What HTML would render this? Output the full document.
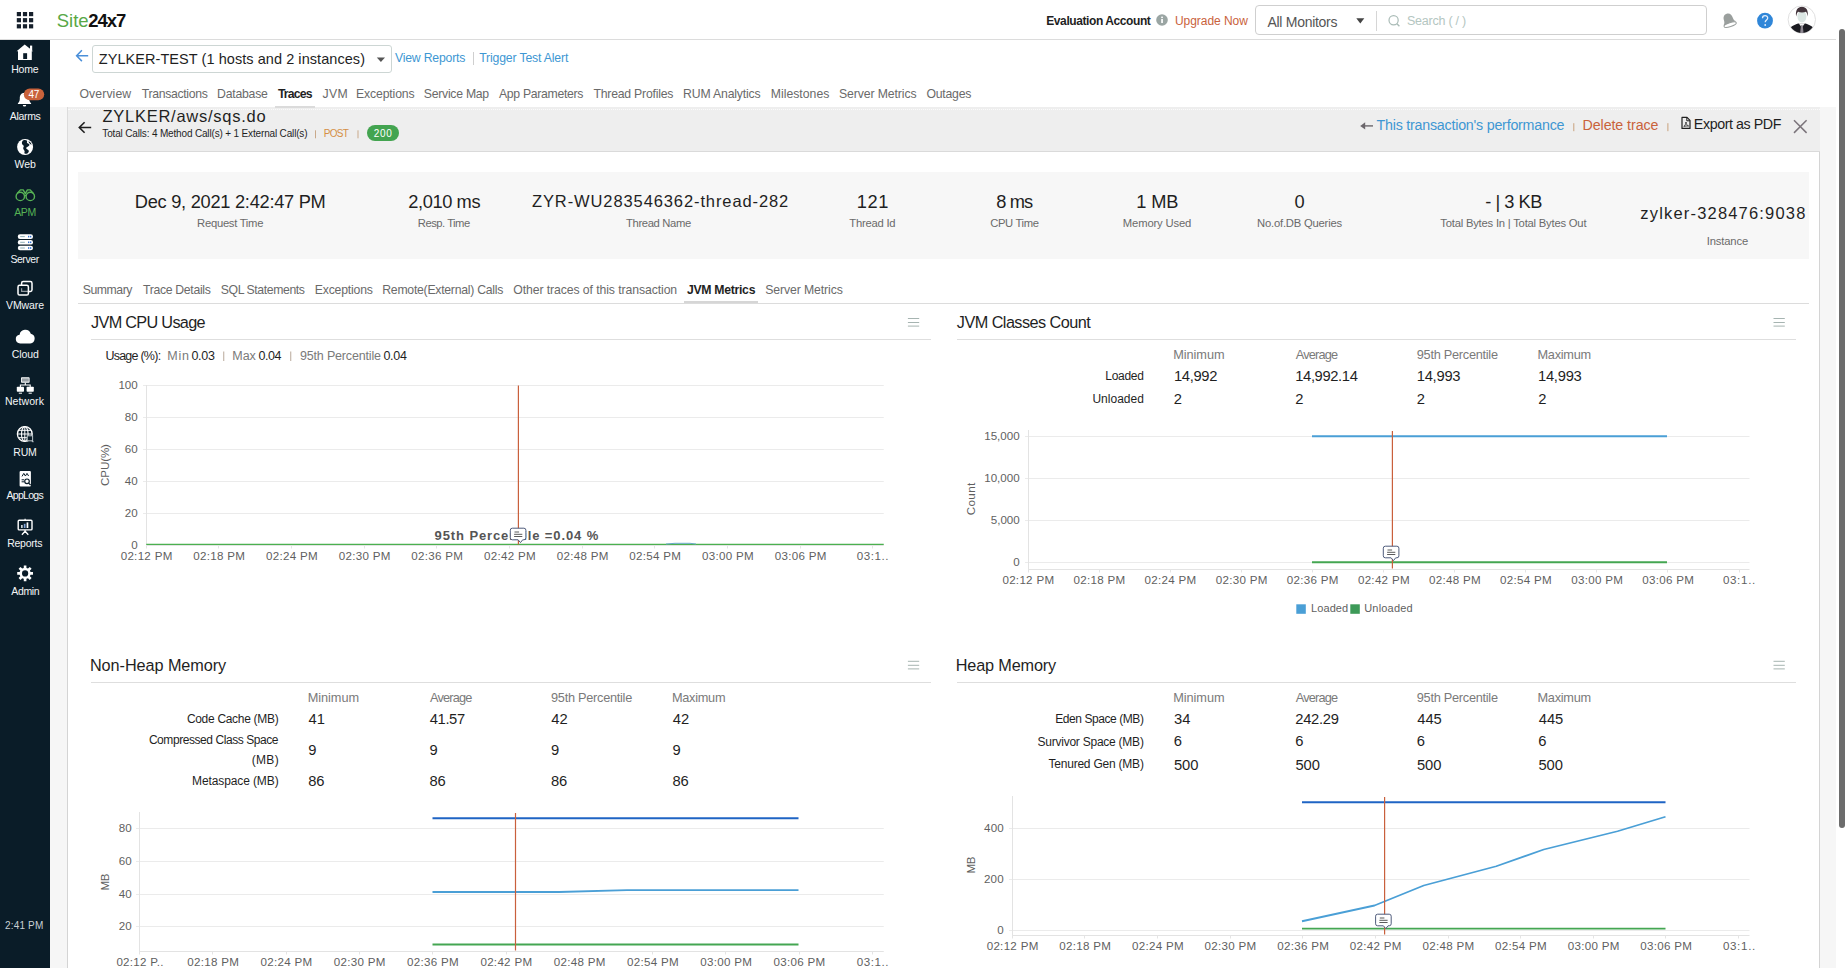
<!DOCTYPE html>
<html lang="en"><head><meta charset="utf-8"><title>Site24x7 - JVM Metrics</title>
<style>
html,body{margin:0;padding:0;overflow:hidden;font-family:"Liberation Sans",sans-serif;}
html{width:1848px;height:968px;}
body{width:1848px;height:968px;overflow:hidden;position:relative;background:#fff;
 font-family:"Liberation Sans",sans-serif;}
.t{position:absolute;white-space:nowrap;font-family:"Liberation Sans",sans-serif;}
.b{position:absolute;box-sizing:border-box;}
svg{position:absolute;left:0;top:0;}
</style></head>
<body>
<div class="b" style="left:0;top:39px;width:1836px;height:1px;background:#dcdcdc"></div>
<div class="b" style="left:0;top:40px;width:50px;height:928px;background:#0a1c28"></div>
<div class="b" style="left:50px;top:107px;width:1786px;height:861px;background:#f6f6f6"></div>
<div class="b" style="left:67px;top:107px;width:1753px;height:861px;background:#fff;border-left:1px solid #d4d4d4;border-right:1px solid #d4d4d4"></div>
<div class="b" style="left:67px;top:107px;width:1753px;height:45px;background:#eeeeee;border-bottom:1px solid #dadada;border-left:1px solid #dcdcdc"></div>
<div class="b" style="left:68px;top:109px;width:1752px;height:0;border-top:1px dotted #fbfbfb"></div>
<div class="b" style="left:78px;top:172px;width:1731px;height:87px;background:#f7f7f7"></div>
<div class="b" style="left:78px;top:303px;width:1731px;height:1px;background:#dcdcdc"></div>
<div class="b" style="left:684px;top:301px;width:74px;height:2px;background:#d6d6d6"></div>
<div class="b" style="left:275px;top:105.500px;width:40px;height:2.500px;background:#dbdbdb"></div>
<div class="b" style="left:91px;top:339px;width:840px;height:1px;background:#dedede"></div>
<div class="b" style="left:957px;top:339px;width:839px;height:1px;background:#dedede"></div>
<div class="b" style="left:91px;top:682px;width:840px;height:1px;background:#dedede"></div>
<div class="b" style="left:957px;top:682px;width:839px;height:1px;background:#dedede"></div>
<div class="b" style="left:92px;top:45px;width:300px;height:28px;border:1px solid #cdd6d4;border-radius:3px;background:#fff"></div>
<div class="b" style="left:1255px;top:5px;width:452px;height:30px;border:1px solid #cfcfcf;border-radius:4px;background:#fff"></div>
<div class="b" style="left:1376px;top:11px;width:1px;height:20px;background:#d6d6d6"></div>
<div class="b" style="left:473px;top:52px;width:1px;height:13px;background:#cfcfcf"></div>
<div class="b" style="left:367px;top:125px;width:32px;height:16px;border-radius:8px;background:#43a450"></div>
<div class="b" style="left:1836px;top:0;width:12px;height:968px;background:#fff"></div>
<div class="b" style="left:1839px;top:29px;width:6px;height:799px;border-radius:3px;background:#6c6c6c"></div>
<span class="t" style="left:434.61px;top:527px;font-size:13px;line-height:17px;color:#555;font-weight:700;letter-spacing:0.885px;">95th Percentile =0.04 %</span>
<svg width="1848" height="968" viewBox="0 0 1848 968"><line x1="143.0" y1="385.5" x2="883.75" y2="385.5" stroke="#ebebeb" stroke-width="1"/><line x1="143.0" y1="417.5" x2="883.75" y2="417.5" stroke="#ebebeb" stroke-width="1"/><line x1="143.0" y1="449.5" x2="883.75" y2="449.5" stroke="#ebebeb" stroke-width="1"/><line x1="143.0" y1="481.5" x2="883.75" y2="481.5" stroke="#ebebeb" stroke-width="1"/><line x1="143.0" y1="513.5" x2="883.75" y2="513.5" stroke="#ebebeb" stroke-width="1"/><line x1="146.5" y1="385" x2="146.5" y2="545" stroke="#e3e3e3" stroke-width="1"/><line x1="146.25" y1="545.5" x2="883.75" y2="545.5" stroke="#e3e3e3" stroke-width="1"/><line x1="146.5" y1="545.5" x2="146.5" y2="548.5" stroke="#e4e4e4" stroke-width="1"/><line x1="218.5" y1="545.5" x2="218.5" y2="548.5" stroke="#e4e4e4" stroke-width="1"/><line x1="291.5" y1="545.5" x2="291.5" y2="548.5" stroke="#e4e4e4" stroke-width="1"/><line x1="364.5" y1="545.5" x2="364.5" y2="548.5" stroke="#e4e4e4" stroke-width="1"/><line x1="436.5" y1="545.5" x2="436.5" y2="548.5" stroke="#e4e4e4" stroke-width="1"/><line x1="509.5" y1="545.5" x2="509.5" y2="548.5" stroke="#e4e4e4" stroke-width="1"/><line x1="582.5" y1="545.5" x2="582.5" y2="548.5" stroke="#e4e4e4" stroke-width="1"/><line x1="654.5" y1="545.5" x2="654.5" y2="548.5" stroke="#e4e4e4" stroke-width="1"/><line x1="727.5" y1="545.5" x2="727.5" y2="548.5" stroke="#e4e4e4" stroke-width="1"/><line x1="800.5" y1="545.5" x2="800.5" y2="548.5" stroke="#e4e4e4" stroke-width="1"/><line x1="872.5" y1="545.5" x2="872.5" y2="548.5" stroke="#e4e4e4" stroke-width="1"/><line x1="146.25" y1="544.4" x2="883.75" y2="544.4" stroke="#4bb04f" stroke-width="1.4"/><path d="M666 544 L675 543.3 L690 543.3 L696 544" stroke="#6aa9c9" stroke-width="1" fill="none"/><line x1="518.4" y1="385.5" x2="518.4" y2="544.5" stroke="#c9603c" stroke-width="1.2"/><path d="M512.3 528.2h11.6a2 2 0 0 1 2 2v7.6a2 2 0 0 1-2 2h-1.2l-2.2 2.8l-2.4-2.800h-5.800a2 2 0 0 1-2-2v-7.600a2 2 0 0 1 2-2z" fill="#fff" stroke="#4f5c7c" stroke-width="1"/><path d="M514.5 532.0h4.600M514.1 534.3000000000001h8.200M514.1 536.5h8.200" stroke="#5a5a5a" stroke-width="1" fill="none"/><line x1="1025" y1="436.5" x2="1749.5" y2="436.5" stroke="#ebebeb" stroke-width="1"/><line x1="1025" y1="478.5" x2="1749.5" y2="478.5" stroke="#ebebeb" stroke-width="1"/><line x1="1025" y1="520.5" x2="1749.5" y2="520.5" stroke="#ebebeb" stroke-width="1"/><line x1="1025" y1="562.5" x2="1749.5" y2="562.5" stroke="#ebebeb" stroke-width="1"/><line x1="1028.5" y1="430" x2="1028.5" y2="569" stroke="#e3e3e3" stroke-width="1"/><line x1="1028" y1="569.5" x2="1749.5" y2="569.5" stroke="#e3e3e3" stroke-width="1"/><line x1="1028.5" y1="569.5" x2="1028.5" y2="572.5" stroke="#e4e4e4" stroke-width="1"/><line x1="1099.5" y1="569.5" x2="1099.5" y2="572.5" stroke="#e4e4e4" stroke-width="1"/><line x1="1170.5" y1="569.5" x2="1170.5" y2="572.5" stroke="#e4e4e4" stroke-width="1"/><line x1="1241.5" y1="569.5" x2="1241.5" y2="572.5" stroke="#e4e4e4" stroke-width="1"/><line x1="1312.5" y1="569.5" x2="1312.5" y2="572.5" stroke="#e4e4e4" stroke-width="1"/><line x1="1383.5" y1="569.5" x2="1383.5" y2="572.5" stroke="#e4e4e4" stroke-width="1"/><line x1="1454.5" y1="569.5" x2="1454.5" y2="572.5" stroke="#e4e4e4" stroke-width="1"/><line x1="1525.5" y1="569.5" x2="1525.5" y2="572.5" stroke="#e4e4e4" stroke-width="1"/><line x1="1596.5" y1="569.5" x2="1596.5" y2="572.5" stroke="#e4e4e4" stroke-width="1"/><line x1="1667.5" y1="569.5" x2="1667.5" y2="572.5" stroke="#e4e4e4" stroke-width="1"/><line x1="1739.5" y1="569.5" x2="1739.5" y2="572.5" stroke="#e4e4e4" stroke-width="1"/><line x1="1312" y1="436.3" x2="1667" y2="436.3" stroke="#4a9fd6" stroke-width="2"/><line x1="1312" y1="562.2" x2="1667" y2="562.2" stroke="#44a652" stroke-width="1.9"/><line x1="1392.4" y1="431" x2="1392.4" y2="568.6" stroke="#c9603c" stroke-width="1.2"/><path d="M1385.3 546.2h11.6a2 2 0 0 1 2 2v7.6a2 2 0 0 1-2 2h-1.2l-2.2 2.8l-2.4-2.800h-5.800a2 2 0 0 1-2-2v-7.600a2 2 0 0 1 2-2z" fill="#fff" stroke="#4f5c7c" stroke-width="1"/><path d="M1387.5 550.0h4.600M1387.1 552.3000000000001h8.200M1387.1 554.5h8.200" stroke="#5a5a5a" stroke-width="1" fill="none"/><rect x="1296.3" y="604.3" width="9.5" height="9.5" fill="#4a9fd6"/><rect x="1350.3" y="604.3" width="9.5" height="9.5" fill="#3d9a58"/><line x1="136.0" y1="828.5" x2="883.75" y2="828.5" stroke="#ebebeb" stroke-width="1"/><line x1="136.0" y1="861.5" x2="883.75" y2="861.5" stroke="#ebebeb" stroke-width="1"/><line x1="136.0" y1="894.5" x2="883.75" y2="894.5" stroke="#ebebeb" stroke-width="1"/><line x1="136.0" y1="926.5" x2="883.75" y2="926.5" stroke="#ebebeb" stroke-width="1"/><line x1="139.5" y1="812" x2="139.5" y2="952" stroke="#e3e3e3" stroke-width="1"/><line x1="139.25" y1="951.5" x2="883.75" y2="951.5" stroke="#e3e3e3" stroke-width="1"/><line x1="139.5" y1="951.5" x2="139.5" y2="954.5" stroke="#e4e4e4" stroke-width="1"/><line x1="212.5" y1="951.5" x2="212.5" y2="954.5" stroke="#e4e4e4" stroke-width="1"/><line x1="286.5" y1="951.5" x2="286.5" y2="954.5" stroke="#e4e4e4" stroke-width="1"/><line x1="359.5" y1="951.5" x2="359.5" y2="954.5" stroke="#e4e4e4" stroke-width="1"/><line x1="432.5" y1="951.5" x2="432.5" y2="954.5" stroke="#e4e4e4" stroke-width="1"/><line x1="506.5" y1="951.5" x2="506.5" y2="954.5" stroke="#e4e4e4" stroke-width="1"/><line x1="579.5" y1="951.5" x2="579.5" y2="954.5" stroke="#e4e4e4" stroke-width="1"/><line x1="652.5" y1="951.5" x2="652.5" y2="954.5" stroke="#e4e4e4" stroke-width="1"/><line x1="725.5" y1="951.5" x2="725.5" y2="954.5" stroke="#e4e4e4" stroke-width="1"/><line x1="799.5" y1="951.5" x2="799.5" y2="954.5" stroke="#e4e4e4" stroke-width="1"/><line x1="872.5" y1="951.5" x2="872.5" y2="954.5" stroke="#e4e4e4" stroke-width="1"/><line x1="432.5" y1="818.3" x2="798.5" y2="818.3" stroke="#1f64c4" stroke-width="1.9"/><path d="M432.5 892 L559 892 L627 890.2 L798.5 890.2" stroke="#4a9fd6" stroke-width="1.8" fill="none"/><line x1="432.5" y1="944.5" x2="798.5" y2="944.5" stroke="#44a652" stroke-width="1.9"/><line x1="515.5" y1="813" x2="515.5" y2="950.5" stroke="#c9603c" stroke-width="1.2"/><line x1="1009.0" y1="828.5" x2="1749.5" y2="828.5" stroke="#ebebeb" stroke-width="1"/><line x1="1009.0" y1="879.5" x2="1749.5" y2="879.5" stroke="#ebebeb" stroke-width="1"/><line x1="1009.0" y1="930.5" x2="1749.5" y2="930.5" stroke="#ebebeb" stroke-width="1"/><line x1="1012.5" y1="796" x2="1012.5" y2="936" stroke="#e3e3e3" stroke-width="1"/><line x1="1012.5" y1="935.5" x2="1749.5" y2="935.5" stroke="#e3e3e3" stroke-width="1"/><line x1="1012.5" y1="935.5" x2="1012.5" y2="938.5" stroke="#e4e4e4" stroke-width="1"/><line x1="1084.5" y1="935.5" x2="1084.5" y2="938.5" stroke="#e4e4e4" stroke-width="1"/><line x1="1157.5" y1="935.5" x2="1157.5" y2="938.5" stroke="#e4e4e4" stroke-width="1"/><line x1="1230.5" y1="935.5" x2="1230.5" y2="938.5" stroke="#e4e4e4" stroke-width="1"/><line x1="1302.5" y1="935.5" x2="1302.5" y2="938.5" stroke="#e4e4e4" stroke-width="1"/><line x1="1375.5" y1="935.5" x2="1375.5" y2="938.5" stroke="#e4e4e4" stroke-width="1"/><line x1="1448.5" y1="935.5" x2="1448.5" y2="938.5" stroke="#e4e4e4" stroke-width="1"/><line x1="1520.5" y1="935.5" x2="1520.5" y2="938.5" stroke="#e4e4e4" stroke-width="1"/><line x1="1593.5" y1="935.5" x2="1593.5" y2="938.5" stroke="#e4e4e4" stroke-width="1"/><line x1="1665.5" y1="935.5" x2="1665.5" y2="938.5" stroke="#e4e4e4" stroke-width="1"/><line x1="1738.5" y1="935.5" x2="1738.5" y2="938.5" stroke="#e4e4e4" stroke-width="1"/><line x1="1302" y1="802.3" x2="1665.5" y2="802.3" stroke="#1f64c4" stroke-width="1.9"/><path d="M1302 921.25 L1374.5 905.5 L1423.75 885.5 L1496.25 866.25 L1543.75 849.5 L1617.5 831.25 L1665.5 816.75" stroke="#4a9fd6" stroke-width="1.8" fill="none" stroke-linejoin="round"/><line x1="1302" y1="928.6" x2="1665.5" y2="928.6" stroke="#44a652" stroke-width="1.9"/><line x1="1384.6" y1="797" x2="1384.6" y2="934.6" stroke="#c9603c" stroke-width="1.2"/><path d="M1377.6 914.2h11.6a2 2 0 0 1 2 2v7.6a2 2 0 0 1-2 2h-1.2l-2.2 2.8l-2.4-2.800h-5.800a2 2 0 0 1-2-2v-7.600a2 2 0 0 1 2-2z" fill="#fff" stroke="#4f5c7c" stroke-width="1"/><path d="M1379.8 918.0h4.600M1379.3999999999999 920.3000000000001h8.200M1379.3999999999999 922.5h8.200" stroke="#5a5a5a" stroke-width="1" fill="none"/><path d="M24.700 44.500 L16.600 51.300 H18 V60 H31.800 V51.300 H33.200 Z" fill="#ffffff"/><rect x="30" y="45.600" width="2.200" height="4.400" fill="#ffffff"/><rect x="23.200" y="53.200" width="3.900" height="5.800" fill="#0a1c28"/><path d="M24.5 92.8c-3.4 0-4.7 2.8-4.7 5.6c0 2.6-.8 3.9-1.9 4.9v.8h13.2v-.8c-1.1-1-1.9-2.3-1.9-4.9c0-2.8-1.3-5.6-4.7-5.6z" fill="#ffffff"/><path d="M22.8 104.9a1.7 1.7 0 0 0 3.4 0z" fill="#ffffff"/><rect x="23.8" y="88.4" width="20.4" height="11.8" rx="5.9" fill="#c9623b"/><circle cx="25.100" cy="147" r="8" fill="#ffffff"/><path d="M23.400 140.300c1.400-.500 3-.300 3.600.500c.500.700-.300 1.300 0 2c.400.900 1.900.700 2.400 1.700c.400 1-.900 1.700-1.700 2.300c-.700.500-1.500.600-1.500 1.400c0 .900 1.700 1.300 2.300 2.100c.700.900.200 2.200-.800 2.900c-1.100.800-2.500.900-3.100.200c-.500-.600.200-1.500 0-2.400c-.200-1-1.300-1.500-1.400-2.600c-.100-.900.700-1.500.600-2.300c-.200-1-1.500-1.300-1.800-2.300c-.400-1.300.300-2.900 1.400-3.500z" fill="#0a1c28"/><path d="M28.600 141.200c1.300.600 2.500 1.900 3.100 3.200c-.800.100-1.600-.300-2-1c-.400-.800-1.300-1.300-1.100-2.200z" fill="#0a1c28"/><circle cx="20.3" cy="196.4" r="4.2" fill="none" stroke="#57b355" stroke-width="1.4"/><circle cx="30.3" cy="196.4" r="4.2" fill="none" stroke="#57b355" stroke-width="1.4"/><path d="M17.2 193.4 L20.4 189.9 H23.2 L25.3 193.6 L27.4 189.9 H30.2 L33.4 193.4" fill="none" stroke="#57b355" stroke-width="1.4" stroke-linejoin="round"/><path d="M24.4 195.5h1.800" stroke="#57b355" stroke-width="1.4"/><rect x="17.8" y="234.3" width="15.2" height="4.6" rx="2.2" fill="#ffffff"/><rect x="20.2" y="236.1" width="4.6" height="1" fill="#8fb0b8"/><rect x="28" y="235.8" width="1.3" height="1.6" fill="#2d6fd0"/><rect x="30" y="235.8" width="1.3" height="1.6" fill="#2d6fd0"/><rect x="17.8" y="240.0" width="15.2" height="4.6" rx="2.2" fill="#ffffff"/><rect x="20.2" y="241.8" width="4.6" height="1" fill="#8fb0b8"/><rect x="28" y="241.5" width="1.3" height="1.6" fill="#2d6fd0"/><rect x="30" y="241.5" width="1.3" height="1.6" fill="#2d6fd0"/><rect x="17.8" y="245.7" width="15.2" height="4.6" rx="2.2" fill="#ffffff"/><rect x="20.2" y="247.5" width="4.6" height="1" fill="#8fb0b8"/><rect x="28" y="247.2" width="1.3" height="1.6" fill="#2d6fd0"/><rect x="30" y="247.2" width="1.3" height="1.6" fill="#2d6fd0"/><rect x="21.6" y="281.6" width="10.4" height="9.8" rx="1.6" fill="none" stroke="#ffffff" stroke-width="1.5"/><rect x="18" y="285.300" width="10.4" height="9.8" rx="1.6" fill="#0a1c28" stroke="#ffffff" stroke-width="1.5"/><path d="M21.6 288.2 V291.4 H28.4" fill="none" stroke="#ffffff" stroke-width="1.2" opacity=".55"/><path d="M20.2 343.4a4.400 4.400 0 0 1-.6-8.760a5.800 5.800 0 0 1 11.200-.9a4.900 4.900 0 0 1-.5 9.660z" fill="#ffffff"/><rect x="21" y="377.300" width="8.600" height="5.400" rx=".8" fill="#ffffff"/><path d="M21.800 379.100h7M21.800 380.900h7" stroke="#0a1c28" stroke-width=".7"/><path d="M25.300 382.700V385M20.400 387V385H30.200V387" fill="none" stroke="#ffffff" stroke-width="1.100"/><rect x="16.800" y="386.800" width="7.200" height="5" rx=".8" fill="#ffffff"/><rect x="26.600" y="386.800" width="7.200" height="5" rx=".8" fill="#ffffff"/><path d="M18.800 393.200h3.200M28.600 393.200h3.200" stroke="#ffffff" stroke-width="1"/><circle cx="24.800" cy="434" r="7.400" fill="none" stroke="#ffffff" stroke-width="1.300"/><ellipse cx="24.800" cy="434" rx="3.300" ry="7.400" fill="none" stroke="#ffffff" stroke-width="1.100"/><path d="M17.400 434h14.800M24.800 426.600v14.800M18.600 430.300h12.400M18.600 437.700h12.400" stroke="#ffffff" stroke-width="1" fill="none"/><rect x="27.200" y="435.800" width="5.400" height="5" fill="#0a1c28" stroke="#b9c2c7" stroke-width="1"/><path d="M31.800 440.600l1.600 1.600" stroke="#b9c2c7" stroke-width="1.200"/><rect x="19.600" y="470.900" width="11.300" height="15.700" rx="1" fill="#ffffff"/><path d="M22 476.400l1.800-3l1.600 2.600l1.600-2.600l1.600 2.600" fill="none" stroke="#0a1c28" stroke-width="1"/><path d="M21.600 479.800h2.400M21.600 481.800h2.400" stroke="#0a1c28" stroke-width="1"/><circle cx="27" cy="481.300" r="2.300" fill="#ffffff" stroke="#0a1c28" stroke-width="1.200"/><path d="M28.700 483.100l1.900 2" stroke="#0a1c28" stroke-width="1.300"/><path d="M25.100 518.800v1.600" stroke="#ffffff" stroke-width="1.200"/><rect x="18.200" y="520.300" width="13.800" height="9.600" rx="1" fill="none" stroke="#ffffff" stroke-width="1.400"/><rect x="21" y="525" width="1.700" height="3" fill="#c8d2d8"/><rect x="23.800" y="523.800" width="1.700" height="4.200" fill="#7fa3d8"/><rect x="26.600" y="522.400" width="1.700" height="5.600" fill="#ffffff"/><path d="M25.100 530v1.400M25.100 531.200l-3.200 3.600M25.100 531.200l3.200 3.600" stroke="#ffffff" stroke-width="1.300" fill="none"/><path d="M23.79 565.51 L26.41 565.51 L26.45 567.97 L27.99 568.60 L29.75 566.89 L31.61 568.75 L29.90 570.51 L30.53 572.05 L32.99 572.09 L32.99 574.71 L30.53 574.75 L29.90 576.29 L31.61 578.05 L29.75 579.91 L27.99 578.20 L26.45 578.83 L26.41 581.29 L23.79 581.29 L23.75 578.83 L22.21 578.20 L20.45 579.91 L18.59 578.05 L20.30 576.29 L19.67 574.75 L17.21 574.71 L17.21 572.09 L19.67 572.05 L20.30 570.51 L18.59 568.75 L20.45 566.89 L22.21 568.60 L23.75 567.97Z" fill="#ffffff"/><circle cx="25.1" cy="573.4" r="3.1" fill="#0a1c28"/><rect x="16.8" y="12.0" width="4.200" height="4.200" fill="#16202c"/><rect x="22.9" y="12.0" width="4.200" height="4.200" fill="#16202c"/><rect x="29.0" y="12.0" width="4.200" height="4.200" fill="#16202c"/><rect x="16.8" y="18.1" width="4.200" height="4.200" fill="#16202c"/><rect x="22.9" y="18.1" width="4.200" height="4.200" fill="#16202c"/><rect x="29.0" y="18.1" width="4.200" height="4.200" fill="#16202c"/><rect x="16.8" y="24.2" width="4.200" height="4.200" fill="#16202c"/><rect x="22.9" y="24.2" width="4.200" height="4.200" fill="#16202c"/><rect x="29.0" y="24.2" width="4.200" height="4.200" fill="#16202c"/><circle cx="1162" cy="20" r="5.800" fill="#9aa5a3"/><rect x="1161.200" y="19" width="1.700" height="4" fill="#fff"/><rect x="1161.200" y="16.600" width="1.700" height="1.500" fill="#fff"/><path d="M1356.300 18.200h8l-4 5.200z" fill="#444"/><circle cx="1393.600" cy="20.300" r="4.600" fill="none" stroke="#a9bbb6" stroke-width="1.200"/><path d="M1396.900 23.700l2.500 2.500" stroke="#a9bbb6" stroke-width="1.300"/><g transform="rotate(-18 1729 21)"><path d="M1729 13.400c-3.200 0-4.600 2.600-4.600 5.400c0 2.600-.8 3.700-2 4.700h13.200c-1.200-1-2-2.100-2-4.700c0-2.800-1.400-5.400-4.600-5.400z" fill="#9a9f9d"/><ellipse cx="1729" cy="24.800" rx="6.400" ry="2" fill="#fff" stroke="#9a9f9d" stroke-width="1"/></g><circle cx="1765" cy="20.700" r="7.900" fill="#2f86d8"/><path d="M1762.500 18.300c0-3.400 5.200-3.400 5.200-.3c0 2-2.500 2-2.500 4.300" fill="none" stroke="#e4eefb" stroke-width="1.300"/><circle cx="1765.200" cy="25" r=".9" fill="#e4eefb"/><clipPath id="av"><circle cx="1801.800" cy="19.600" r="13.300"/></clipPath><circle cx="1801.800" cy="19.600" r="13.700" fill="#fff" stroke="#dcdcdc" stroke-width=".9"/><g clip-path="url(#av)"><path d="M1789 36v-5.500c0-3.200 5-5.400 9.200-6.900h7.200c4.200 1.500 9.200 3.700 9.200 6.900v5.500z" fill="#1b1b21"/><path d="M1798.600 23.200l3.200 4.200l3.200-4.200z" fill="#f4f4f4"/><path d="M1801 25.300h1.700l.9 8h-3.500z" fill="#8d8791"/><ellipse cx="1801.900" cy="16.600" rx="4.500" ry="6" fill="#dbe6e3"/><path d="M1796.200 16.400c-1.200-6 1.600-9.700 5.700-9.700s6.900 3.700 5.700 9.700c-.3-2.300-.8-3.700-1.700-4.700c-2 1-5.800 1-7.800 0c-.9 1-1.500 2.400-1.900 4.700z" fill="#43353c"/></g><path d="M376.800 57.600h8.200l-4.100 4.500z" fill="#555"/><path d="M88.200 55.700H77.200M81.900 50.300l-5.300 5.400l5.300 5.400" fill="none" stroke="#4a8fd9" stroke-width="1.500"/><path d="M91.200 127.500H79.800M84.600 122.200l-5.300 5.300l5.300 5.300" fill="none" stroke="#1f1f1f" stroke-width="1.600"/><path d="M1373 125.900h-9.500" stroke="#6b666b" stroke-width="1.400"/><path d="M1365.200 122.300l-5 3.600l5 3.600z" fill="#6b666b"/><path d="M1573.8 123.200v8" stroke="#c9a27c" stroke-width="1"/><path d="M1667.9 123.200v8" stroke="#c9a27c" stroke-width="1"/><path d="M315.5 130.300v8" stroke="#c9a98a" stroke-width="1"/><path d="M358 130.300v8" stroke="#c9a98a" stroke-width="1"/><path d="M223.75 351.500v9.500" stroke="#b8a89a" stroke-width="1"/><path d="M290.75 351.500v9.500" stroke="#b8a89a" stroke-width="1"/><path d="M1682 117.400h5l3 3v8h-8z" fill="none" stroke="#1f1f1f" stroke-width="1.200" stroke-linejoin="round"/><path d="M1686.800 117.600v3.200h3" fill="none" stroke="#1f1f1f" stroke-width="1"/><path d="M1683.800 126.400c1.400-1 2.200-2.800 2.200-4.400c0 1.800 1 3.400 2.600 4c-1.600-.2-3.400 0-4.800.4z" fill="none" stroke="#1f1f1f" stroke-width=".8"/><path d="M1794 120.300l12.600 12.600M1806.600 120.300l-12.600 12.600" stroke="#7b747b" stroke-width="1.500"/><path d="M907.9 318.5h11.300M907.9 322.5h11.300M907.9 326.09999999999997h11.300" stroke="#a6b4b1" stroke-width="1" fill="none"/><path d="M1773.5 318.5h11.300M1773.5 322.5h11.300M1773.5 326.09999999999997h11.300" stroke="#a6b4b1" stroke-width="1" fill="none"/><path d="M907.9 661.3h11.300M907.9 665.3h11.300M907.9 668.9h11.300" stroke="#a6b4b1" stroke-width="1" fill="none"/><path d="M1773.5 661.3h11.300M1773.5 665.3h11.300M1773.5 668.9h11.300" stroke="#a6b4b1" stroke-width="1" fill="none"/></svg>
<span class="t" style="left:56.76px;top:9px;font-size:18.5px;line-height:23px;color:#58a846;letter-spacing:0.01px;">Site</span>
<span class="t" style="left:88.19px;top:9px;font-size:18.5px;line-height:23px;color:#111;font-weight:700;letter-spacing:-0.977px;">24x7</span>
<span class="t" style="left:1046.28px;top:14px;font-size:12.0px;line-height:14px;color:#1f1f1f;font-weight:700;letter-spacing:-0.412px;">Evaluation Account</span>
<span class="t" style="left:1174.91px;top:14px;font-size:12.0px;line-height:14px;color:#c9623b;letter-spacing:-0.038px;">Upgrade Now</span>
<span class="t" style="left:1267.5px;top:13px;font-size:14.0px;line-height:18px;color:#555;letter-spacing:-0.292px;">All Monitors</span>
<span class="t" style="left:1407.0px;top:13px;font-size:12.5px;line-height:16px;color:#b4c6c1;letter-spacing:-0.242px;">Search ( / )</span>
<span class="t" style="left:98.81px;top:50px;font-size:14.5px;line-height:18px;color:#1f1f1f;letter-spacing:0.059px;">ZYLKER-TEST (1 hosts and 2 instances)</span>
<span class="t" style="left:395.0px;top:50px;font-size:12.25px;line-height:16px;color:#3e97d3;letter-spacing:-0.205px;">View Reports</span>
<span class="t" style="left:479.25px;top:50px;font-size:12.25px;line-height:16px;color:#3e97d3;letter-spacing:-0.167px;">Trigger Test Alert</span>
<span class="t" style="left:79.51px;top:86px;font-size:12.25px;line-height:16px;color:#6a6a6a;letter-spacing:0.085px;">Overview</span>
<span class="t" style="left:141.75px;top:86px;font-size:12.25px;line-height:16px;color:#6a6a6a;letter-spacing:-0.324px;">Transactions</span>
<span class="t" style="left:217.02px;top:86px;font-size:12.25px;line-height:16px;color:#6a6a6a;letter-spacing:-0.217px;">Database</span>
<span class="t" style="left:277.88px;top:86px;font-size:12.25px;line-height:16px;color:#1f1f1f;font-weight:700;letter-spacing:-0.852px;">Traces</span>
<span class="t" style="left:322.38px;top:86px;font-size:12.25px;line-height:16px;color:#6a6a6a;letter-spacing:0.383px;">JVM</span>
<span class="t" style="left:356.02px;top:86px;font-size:12.25px;line-height:16px;color:#6a6a6a;letter-spacing:-0.147px;">Exceptions</span>
<span class="t" style="left:423.76px;top:86px;font-size:12.25px;line-height:16px;color:#6a6a6a;letter-spacing:-0.265px;">Service Map</span>
<span class="t" style="left:499.0px;top:86px;font-size:12.25px;line-height:16px;color:#6a6a6a;letter-spacing:-0.319px;">App Parameters</span>
<span class="t" style="left:593.5px;top:86px;font-size:12.25px;line-height:16px;color:#6a6a6a;letter-spacing:-0.229px;">Thread Profiles</span>
<span class="t" style="left:683.02px;top:86px;font-size:12.25px;line-height:16px;color:#6a6a6a;letter-spacing:-0.164px;">RUM Analytics</span>
<span class="t" style="left:770.77px;top:86px;font-size:12.25px;line-height:16px;color:#6a6a6a;">Milestones</span>
<span class="t" style="left:839.01px;top:86px;font-size:12.25px;line-height:16px;color:#6a6a6a;letter-spacing:-0.104px;">Server Metrics</span>
<span class="t" style="left:926.51px;top:86px;font-size:12.25px;line-height:16px;color:#6a6a6a;letter-spacing:-0.242px;">Outages</span>
<span class="t" style="left:102.5px;top:106px;font-size:16.5px;line-height:20px;color:#1f1f1f;letter-spacing:0.736px;">ZYLKER/aws/sqs.do</span>
<span class="t" style="left:102.3px;top:127px;font-size:10.0px;line-height:13px;color:#1f1f1f;letter-spacing:-0.161px;">Total Calls: 4 Method Call(s) + 1 External Call(s)</span>
<span class="t" style="left:323.7px;top:127px;font-size:10.0px;line-height:13px;color:#d58f45;letter-spacing:-0.656px;">POST</span>
<span class="t" style="left:373.75px;top:127px;font-size:10.0px;line-height:13px;color:#fff;letter-spacing:0.713px;">200</span>
<span class="t" style="left:1376.51px;top:116px;font-size:14.25px;line-height:18px;color:#3e97d3;letter-spacing:-0.22px;">This transaction's performance</span>
<span class="t" style="left:1582.46px;top:116px;font-size:14.25px;line-height:18px;color:#c9623b;letter-spacing:-0.07px;">Delete trace</span>
<span class="t" style="left:1693.86px;top:115px;font-size:14.25px;line-height:18px;color:#1f1f1f;letter-spacing:-0.423px;">Export as PDF</span>
<span class="t" style="left:134.79px;top:190px;font-size:18.25px;line-height:23px;color:#1f1f1f;letter-spacing:-0.275px;">Dec 9, 2021 2:42:47 PM</span>
<span class="t" style="left:197.1px;top:216px;font-size:11.25px;line-height:14px;color:#6a6a6a;letter-spacing:-0.278px;">Request Time</span>
<span class="t" style="left:408.34px;top:190px;font-size:18.25px;line-height:23px;color:#1f1f1f;letter-spacing:-0.408px;">2,010 ms</span>
<span class="t" style="left:417.85px;top:216px;font-size:11.25px;line-height:14px;color:#6a6a6a;letter-spacing:-0.504px;">Resp. Time</span>
<span class="t" style="left:626.02px;top:216px;font-size:11.25px;line-height:14px;color:#6a6a6a;letter-spacing:-0.365px;">Thread Name</span>
<span class="t" style="left:856.72px;top:190px;font-size:18.25px;line-height:23px;color:#1f1f1f;letter-spacing:0.585px;">121</span>
<span class="t" style="left:849.27px;top:216px;font-size:11.25px;line-height:14px;color:#6a6a6a;letter-spacing:-0.225px;">Thread Id</span>
<span class="t" style="left:996.27px;top:190px;font-size:18.25px;line-height:23px;color:#1f1f1f;letter-spacing:-0.923px;">8 ms</span>
<span class="t" style="left:990.19px;top:216px;font-size:11.25px;line-height:14px;color:#6a6a6a;letter-spacing:-0.356px;">CPU Time</span>
<span class="t" style="left:1136.22px;top:190px;font-size:18.25px;line-height:23px;color:#1f1f1f;letter-spacing:-0.153px;">1 MB</span>
<span class="t" style="left:1122.85px;top:216px;font-size:11.25px;line-height:14px;color:#6a6a6a;letter-spacing:-0.148px;">Memory Used</span>
<span class="t" style="left:1294.45px;top:190px;font-size:18.25px;line-height:23px;color:#1f1f1f;">0</span>
<span class="t" style="left:1257.1px;top:216px;font-size:11.25px;line-height:14px;color:#6a6a6a;letter-spacing:-0.211px;">No.of.DB Queries</span>
<span class="t" style="left:1485.27px;top:190px;font-size:18.25px;line-height:23px;color:#1f1f1f;letter-spacing:-0.491px;">- | 3 KB</span>
<span class="t" style="left:1440.28px;top:216px;font-size:11.25px;line-height:14px;color:#6a6a6a;letter-spacing:-0.211px;">Total Bytes In | Total Bytes Out</span>
<span class="t" style="left:532.0px;top:191px;font-size:16.5px;line-height:20px;color:#1f1f1f;letter-spacing:0.895px;">ZYR-WU283546362-thread-282</span>
<span class="t" style="left:1640.34px;top:203px;font-size:16.5px;line-height:20px;color:#1f1f1f;letter-spacing:1.181px;">zylker-328476:9038</span>
<span class="t" style="left:1706.74px;top:234px;font-size:11.25px;line-height:14px;color:#6a6a6a;letter-spacing:-0.158px;">Instance</span>
<span class="t" style="left:82.76px;top:282px;font-size:12.25px;line-height:16px;color:#6a6a6a;letter-spacing:-0.445px;">Summary</span>
<span class="t" style="left:143.0px;top:282px;font-size:12.25px;line-height:16px;color:#6a6a6a;letter-spacing:-0.32px;">Trace Details</span>
<span class="t" style="left:220.76px;top:282px;font-size:12.25px;line-height:16px;color:#6a6a6a;letter-spacing:-0.405px;">SQL Statements</span>
<span class="t" style="left:314.77px;top:282px;font-size:12.25px;line-height:16px;color:#6a6a6a;letter-spacing:-0.203px;">Exceptions</span>
<span class="t" style="left:382.27px;top:282px;font-size:12.25px;line-height:16px;color:#6a6a6a;letter-spacing:-0.263px;">Remote(External) Calls</span>
<span class="t" style="left:513.26px;top:282px;font-size:12.25px;line-height:16px;color:#6a6a6a;letter-spacing:-0.093px;">Other traces of this transaction</span>
<span class="t" style="left:686.88px;top:282px;font-size:12.25px;line-height:16px;color:#1f1f1f;font-weight:700;letter-spacing:-0.292px;">JVM Metrics</span>
<span class="t" style="left:765.26px;top:282px;font-size:12.25px;line-height:16px;color:#6a6a6a;letter-spacing:-0.104px;">Server Metrics</span>
<span class="t" style="left:91.09px;top:312px;font-size:16.25px;line-height:20px;color:#1f1f1f;letter-spacing:-0.693px;">JVM CPU Usage</span>
<span class="t" style="left:956.84px;top:312px;font-size:16.25px;line-height:20px;color:#1f1f1f;letter-spacing:-0.551px;">JVM Classes Count</span>
<span class="t" style="left:89.95px;top:655px;font-size:16.25px;line-height:20px;color:#1f1f1f;letter-spacing:-0.069px;">Non-Heap Memory</span>
<span class="t" style="left:955.7px;top:655px;font-size:16.25px;line-height:20px;color:#1f1f1f;letter-spacing:-0.15px;">Heap Memory</span>
<span class="t" style="left:105.38px;top:348px;font-size:12.5px;line-height:16px;color:#1f1f1f;letter-spacing:-0.755px;">Usage (%):</span>
<span class="t" style="left:167.25px;top:348px;font-size:12.5px;line-height:16px;color:#7a7a7a;letter-spacing:0.78px;">Min</span>
<span class="t" style="left:191.38px;top:348px;font-size:12.5px;line-height:16px;color:#1f1f1f;letter-spacing:-0.251px;">0.03</span>
<span class="t" style="left:232.25px;top:348px;font-size:12.5px;line-height:16px;color:#7a7a7a;">Max</span>
<span class="t" style="left:258.38px;top:348px;font-size:12.5px;line-height:16px;color:#1f1f1f;letter-spacing:-0.376px;">0.04</span>
<span class="t" style="left:300.0px;top:348px;font-size:12.5px;line-height:16px;color:#7a7a7a;letter-spacing:-0.174px;">95th Percentile</span>
<span class="t" style="left:383.38px;top:348px;font-size:12.5px;line-height:16px;color:#1f1f1f;letter-spacing:-0.292px;">0.04</span>
<span class="t" style="left:1173.23px;top:347px;font-size:12.75px;line-height:15px;color:#7a7a7a;letter-spacing:-0.064px;">Minimum</span>
<span class="t" style="left:1295.75px;top:347px;font-size:12.75px;line-height:15px;color:#7a7a7a;letter-spacing:-0.8px;">Average</span>
<span class="t" style="left:1416.74px;top:347px;font-size:12.75px;line-height:15px;color:#7a7a7a;letter-spacing:-0.27px;">95th Percentile</span>
<span class="t" style="left:1537.48px;top:347px;font-size:12.75px;line-height:15px;color:#7a7a7a;letter-spacing:-0.271px;">Maximum</span>
<span class="t" style="left:307.73px;top:690px;font-size:12.75px;line-height:15px;color:#7a7a7a;letter-spacing:-0.064px;">Minimum</span>
<span class="t" style="left:430.0px;top:690px;font-size:12.75px;line-height:15px;color:#7a7a7a;letter-spacing:-0.8px;">Average</span>
<span class="t" style="left:550.99px;top:690px;font-size:12.75px;line-height:15px;color:#7a7a7a;letter-spacing:-0.27px;">95th Percentile</span>
<span class="t" style="left:671.88px;top:690px;font-size:12.75px;line-height:15px;color:#7a7a7a;letter-spacing:-0.271px;">Maximum</span>
<span class="t" style="left:1173.23px;top:690px;font-size:12.75px;line-height:15px;color:#7a7a7a;letter-spacing:-0.064px;">Minimum</span>
<span class="t" style="left:1295.75px;top:690px;font-size:12.75px;line-height:15px;color:#7a7a7a;letter-spacing:-0.8px;">Average</span>
<span class="t" style="left:1416.74px;top:690px;font-size:12.75px;line-height:15px;color:#7a7a7a;letter-spacing:-0.27px;">95th Percentile</span>
<span class="t" style="left:1537.48px;top:690px;font-size:12.75px;line-height:15px;color:#7a7a7a;letter-spacing:-0.271px;">Maximum</span>
<span class="t" style="left:1105.29px;top:369px;font-size:12.0px;line-height:14px;color:#1f1f1f;letter-spacing:-0.282px;">Loaded</span>
<span class="t" style="left:1173.97px;top:367px;font-size:14.75px;line-height:18px;color:#1f1f1f;letter-spacing:-0.33px;">14,992</span>
<span class="t" style="left:1295.22px;top:367px;font-size:14.75px;line-height:18px;color:#1f1f1f;letter-spacing:-0.369px;">14,992.14</span>
<span class="t" style="left:1416.72px;top:367px;font-size:14.75px;line-height:18px;color:#1f1f1f;letter-spacing:-0.26px;">14,993</span>
<span class="t" style="left:1537.97px;top:367px;font-size:14.75px;line-height:18px;color:#1f1f1f;letter-spacing:-0.26px;">14,993</span>
<span class="t" style="left:1092.41px;top:392px;font-size:12.0px;line-height:14px;color:#1f1f1f;letter-spacing:0.02px;">Unloaded</span>
<span class="t" style="left:1173.76px;top:390px;font-size:14.75px;line-height:18px;color:#1f1f1f;">2</span>
<span class="t" style="left:1295.26px;top:390px;font-size:14.75px;line-height:18px;color:#1f1f1f;">2</span>
<span class="t" style="left:1416.76px;top:390px;font-size:14.75px;line-height:18px;color:#1f1f1f;">2</span>
<span class="t" style="left:1538.26px;top:390px;font-size:14.75px;line-height:18px;color:#1f1f1f;">2</span>
<span class="t" style="left:186.9px;top:712px;font-size:12.0px;line-height:14px;color:#1f1f1f;letter-spacing:-0.307px;">Code Cache (MB)</span>
<span class="t" style="left:308.45px;top:710px;font-size:14.75px;line-height:18px;color:#1f1f1f;">41</span>
<span class="t" style="left:429.7px;top:710px;font-size:14.75px;line-height:18px;color:#1f1f1f;letter-spacing:-0.359px;">41.57</span>
<span class="t" style="left:551.21px;top:710px;font-size:14.75px;line-height:18px;color:#1f1f1f;">42</span>
<span class="t" style="left:672.71px;top:710px;font-size:14.75px;line-height:18px;color:#1f1f1f;">42</span>
<span class="t" style="left:148.9px;top:733px;font-size:12.0px;line-height:14px;color:#1f1f1f;letter-spacing:-0.438px;">Compressed Class Space</span>
<span class="t" style="left:251.78px;top:753px;font-size:12.0px;line-height:14px;color:#1f1f1f;letter-spacing:0.288px;">(MB)</span>
<span class="t" style="left:308.16px;top:741px;font-size:14.75px;line-height:18px;color:#1f1f1f;">9</span>
<span class="t" style="left:429.41px;top:741px;font-size:14.75px;line-height:18px;color:#1f1f1f;">9</span>
<span class="t" style="left:550.91px;top:741px;font-size:14.75px;line-height:18px;color:#1f1f1f;">9</span>
<span class="t" style="left:672.41px;top:741px;font-size:14.75px;line-height:18px;color:#1f1f1f;">9</span>
<span class="t" style="left:192.04px;top:774px;font-size:12.0px;line-height:14px;color:#1f1f1f;letter-spacing:-0.11px;">Metaspace (MB)</span>
<span class="t" style="left:308.16px;top:772px;font-size:14.75px;line-height:18px;color:#1f1f1f;">86</span>
<span class="t" style="left:429.41px;top:772px;font-size:14.75px;line-height:18px;color:#1f1f1f;">86</span>
<span class="t" style="left:550.91px;top:772px;font-size:14.75px;line-height:18px;color:#1f1f1f;">86</span>
<span class="t" style="left:672.41px;top:772px;font-size:14.75px;line-height:18px;color:#1f1f1f;">86</span>
<span class="t" style="left:1055.29px;top:712px;font-size:12.0px;line-height:14px;color:#1f1f1f;letter-spacing:-0.437px;">Eden Space (MB)</span>
<span class="t" style="left:1174.06px;top:710px;font-size:14.75px;line-height:18px;color:#1f1f1f;">34</span>
<span class="t" style="left:1295.26px;top:710px;font-size:14.75px;line-height:18px;color:#1f1f1f;letter-spacing:-0.289px;">242.29</span>
<span class="t" style="left:1417.2px;top:710px;font-size:14.75px;line-height:18px;color:#1f1f1f;">445</span>
<span class="t" style="left:1538.7px;top:710px;font-size:14.75px;line-height:18px;color:#1f1f1f;">445</span>
<span class="t" style="left:1037.52px;top:735px;font-size:12.0px;line-height:14px;color:#1f1f1f;letter-spacing:-0.241px;">Survivor Space (MB)</span>
<span class="t" style="left:1173.76px;top:732px;font-size:14.75px;line-height:18px;color:#1f1f1f;">6</span>
<span class="t" style="left:1295.26px;top:732px;font-size:14.75px;line-height:18px;color:#1f1f1f;">6</span>
<span class="t" style="left:1416.76px;top:732px;font-size:14.75px;line-height:18px;color:#1f1f1f;">6</span>
<span class="t" style="left:1538.26px;top:732px;font-size:14.75px;line-height:18px;color:#1f1f1f;">6</span>
<span class="t" style="left:1048.51px;top:757px;font-size:12.0px;line-height:14px;color:#1f1f1f;letter-spacing:-0.222px;">Tenured Gen (MB)</span>
<span class="t" style="left:1173.91px;top:756px;font-size:14.75px;line-height:18px;color:#1f1f1f;">500</span>
<span class="t" style="left:1295.41px;top:756px;font-size:14.75px;line-height:18px;color:#1f1f1f;">500</span>
<span class="t" style="left:1416.91px;top:756px;font-size:14.75px;line-height:18px;color:#1f1f1f;">500</span>
<span class="t" style="left:1538.41px;top:756px;font-size:14.75px;line-height:18px;color:#1f1f1f;">500</span>
<span class="t" style="left:120.65px;top:549px;font-size:11.6px;line-height:14px;color:#5f5f5f;letter-spacing:0.292px;">02:12 PM</span>
<span class="t" style="left:193.32px;top:549px;font-size:11.6px;line-height:14px;color:#5f5f5f;letter-spacing:0.292px;">02:18 PM</span>
<span class="t" style="left:265.99px;top:549px;font-size:11.6px;line-height:14px;color:#5f5f5f;letter-spacing:0.292px;">02:24 PM</span>
<span class="t" style="left:338.66px;top:549px;font-size:11.6px;line-height:14px;color:#5f5f5f;letter-spacing:0.292px;">02:30 PM</span>
<span class="t" style="left:411.33px;top:549px;font-size:11.6px;line-height:14px;color:#5f5f5f;letter-spacing:0.292px;">02:36 PM</span>
<span class="t" style="left:484.0px;top:549px;font-size:11.6px;line-height:14px;color:#5f5f5f;letter-spacing:0.292px;">02:42 PM</span>
<span class="t" style="left:556.67px;top:549px;font-size:11.6px;line-height:14px;color:#5f5f5f;letter-spacing:0.292px;">02:48 PM</span>
<span class="t" style="left:629.34px;top:549px;font-size:11.6px;line-height:14px;color:#5f5f5f;letter-spacing:0.292px;">02:54 PM</span>
<span class="t" style="left:702.01px;top:549px;font-size:11.6px;line-height:14px;color:#5f5f5f;letter-spacing:0.292px;">03:00 PM</span>
<span class="t" style="left:774.68px;top:549px;font-size:11.6px;line-height:14px;color:#5f5f5f;letter-spacing:0.292px;">03:06 PM</span>
<span class="t" style="left:856.65px;top:549px;font-size:11.6px;line-height:14px;color:#5f5f5f;letter-spacing:0.569px;">03:1..</span>
<span class="t" style="left:118.39px;top:378px;font-size:11.6px;line-height:14px;color:#5f5f5f;letter-spacing:-0.011px;">100</span>
<span class="t" style="left:124.84px;top:410px;font-size:11.6px;line-height:14px;color:#5f5f5f;letter-spacing:-0.019px;">80</span>
<span class="t" style="left:124.72px;top:442px;font-size:11.6px;line-height:14px;color:#5f5f5f;letter-spacing:0.097px;">60</span>
<span class="t" style="left:124.87px;top:474px;font-size:11.6px;line-height:14px;color:#5f5f5f;letter-spacing:-0.051px;">40</span>
<span class="t" style="left:124.72px;top:506px;font-size:11.6px;line-height:14px;color:#5f5f5f;letter-spacing:0.097px;">20</span>
<span class="t" style="left:131.35px;top:538px;font-size:11.6px;line-height:14px;color:#5f5f5f;">0</span>
<span class="t" style="left:1002.4px;top:573px;font-size:11.6px;line-height:14px;color:#5f5f5f;letter-spacing:0.292px;">02:12 PM</span>
<span class="t" style="left:1073.5px;top:573px;font-size:11.6px;line-height:14px;color:#5f5f5f;letter-spacing:0.292px;">02:18 PM</span>
<span class="t" style="left:1144.6px;top:573px;font-size:11.6px;line-height:14px;color:#5f5f5f;letter-spacing:0.292px;">02:24 PM</span>
<span class="t" style="left:1215.7px;top:573px;font-size:11.6px;line-height:14px;color:#5f5f5f;letter-spacing:0.292px;">02:30 PM</span>
<span class="t" style="left:1286.8px;top:573px;font-size:11.6px;line-height:14px;color:#5f5f5f;letter-spacing:0.292px;">02:36 PM</span>
<span class="t" style="left:1357.9px;top:573px;font-size:11.6px;line-height:14px;color:#5f5f5f;letter-spacing:0.292px;">02:42 PM</span>
<span class="t" style="left:1429.0px;top:573px;font-size:11.6px;line-height:14px;color:#5f5f5f;letter-spacing:0.292px;">02:48 PM</span>
<span class="t" style="left:1500.1px;top:573px;font-size:11.6px;line-height:14px;color:#5f5f5f;letter-spacing:0.292px;">02:54 PM</span>
<span class="t" style="left:1571.2px;top:573px;font-size:11.6px;line-height:14px;color:#5f5f5f;letter-spacing:0.292px;">03:00 PM</span>
<span class="t" style="left:1642.3px;top:573px;font-size:11.6px;line-height:14px;color:#5f5f5f;letter-spacing:0.292px;">03:06 PM</span>
<span class="t" style="left:1722.9px;top:573px;font-size:11.6px;line-height:14px;color:#5f5f5f;letter-spacing:0.669px;">03:1..</span>
<span class="t" style="left:984.19px;top:429px;font-size:11.6px;line-height:14px;color:#5f5f5f;">15,000</span>
<span class="t" style="left:984.19px;top:471px;font-size:11.6px;line-height:14px;color:#5f5f5f;">10,000</span>
<span class="t" style="left:990.79px;top:513px;font-size:11.6px;line-height:14px;color:#5f5f5f;letter-spacing:-0.036px;">5,000</span>
<span class="t" style="left:1013.3px;top:555px;font-size:11.6px;line-height:14px;color:#5f5f5f;">0</span>
<span class="t" style="left:116.4px;top:955px;font-size:11.6px;line-height:14px;color:#5f5f5f;letter-spacing:0.272px;">02:12 P..</span>
<span class="t" style="left:187.2px;top:955px;font-size:11.6px;line-height:14px;color:#5f5f5f;letter-spacing:0.292px;">02:18 PM</span>
<span class="t" style="left:260.5px;top:955px;font-size:11.6px;line-height:14px;color:#5f5f5f;letter-spacing:0.292px;">02:24 PM</span>
<span class="t" style="left:333.8px;top:955px;font-size:11.6px;line-height:14px;color:#5f5f5f;letter-spacing:0.292px;">02:30 PM</span>
<span class="t" style="left:407.1px;top:955px;font-size:11.6px;line-height:14px;color:#5f5f5f;letter-spacing:0.292px;">02:36 PM</span>
<span class="t" style="left:480.4px;top:955px;font-size:11.6px;line-height:14px;color:#5f5f5f;letter-spacing:0.292px;">02:42 PM</span>
<span class="t" style="left:553.7px;top:955px;font-size:11.6px;line-height:14px;color:#5f5f5f;letter-spacing:0.292px;">02:48 PM</span>
<span class="t" style="left:627.0px;top:955px;font-size:11.6px;line-height:14px;color:#5f5f5f;letter-spacing:0.292px;">02:54 PM</span>
<span class="t" style="left:700.3px;top:955px;font-size:11.6px;line-height:14px;color:#5f5f5f;letter-spacing:0.292px;">03:00 PM</span>
<span class="t" style="left:773.6px;top:955px;font-size:11.6px;line-height:14px;color:#5f5f5f;letter-spacing:0.292px;">03:06 PM</span>
<span class="t" style="left:856.65px;top:955px;font-size:11.6px;line-height:14px;color:#5f5f5f;letter-spacing:0.569px;">03:1..</span>
<span class="t" style="left:118.79px;top:821px;font-size:11.6px;line-height:14px;color:#5f5f5f;letter-spacing:-0.019px;">80</span>
<span class="t" style="left:118.67px;top:854px;font-size:11.6px;line-height:14px;color:#5f5f5f;letter-spacing:0.097px;">60</span>
<span class="t" style="left:118.82px;top:887px;font-size:11.6px;line-height:14px;color:#5f5f5f;letter-spacing:-0.051px;">40</span>
<span class="t" style="left:118.67px;top:919px;font-size:11.6px;line-height:14px;color:#5f5f5f;letter-spacing:0.097px;">20</span>
<span class="t" style="left:986.65px;top:939px;font-size:11.6px;line-height:14px;color:#5f5f5f;letter-spacing:0.292px;">02:12 PM</span>
<span class="t" style="left:1059.28px;top:939px;font-size:11.6px;line-height:14px;color:#5f5f5f;letter-spacing:0.292px;">02:18 PM</span>
<span class="t" style="left:1131.91px;top:939px;font-size:11.6px;line-height:14px;color:#5f5f5f;letter-spacing:0.292px;">02:24 PM</span>
<span class="t" style="left:1204.54px;top:939px;font-size:11.6px;line-height:14px;color:#5f5f5f;letter-spacing:0.292px;">02:30 PM</span>
<span class="t" style="left:1277.17px;top:939px;font-size:11.6px;line-height:14px;color:#5f5f5f;letter-spacing:0.292px;">02:36 PM</span>
<span class="t" style="left:1349.8px;top:939px;font-size:11.6px;line-height:14px;color:#5f5f5f;letter-spacing:0.292px;">02:42 PM</span>
<span class="t" style="left:1422.43px;top:939px;font-size:11.6px;line-height:14px;color:#5f5f5f;letter-spacing:0.292px;">02:48 PM</span>
<span class="t" style="left:1495.06px;top:939px;font-size:11.6px;line-height:14px;color:#5f5f5f;letter-spacing:0.292px;">02:54 PM</span>
<span class="t" style="left:1567.69px;top:939px;font-size:11.6px;line-height:14px;color:#5f5f5f;letter-spacing:0.292px;">03:00 PM</span>
<span class="t" style="left:1640.32px;top:939px;font-size:11.6px;line-height:14px;color:#5f5f5f;letter-spacing:0.292px;">03:06 PM</span>
<span class="t" style="left:1722.9px;top:939px;font-size:11.6px;line-height:14px;color:#5f5f5f;letter-spacing:0.669px;">03:1..</span>
<span class="t" style="left:984.12px;top:821px;font-size:11.6px;line-height:14px;color:#5f5f5f;letter-spacing:0.099px;">400</span>
<span class="t" style="left:983.97px;top:872px;font-size:11.6px;line-height:14px;color:#5f5f5f;letter-spacing:0.173px;">200</span>
<span class="t" style="left:997.3px;top:923px;font-size:11.6px;line-height:14px;color:#5f5f5f;">0</span>
<span class="t" style="left:1311.12px;top:601px;font-size:11px;line-height:14px;color:#5f5f5f;letter-spacing:0.058px;">Loaded</span>
<span class="t" style="left:1364.23px;top:601px;font-size:11px;line-height:14px;color:#5f5f5f;letter-spacing:0.185px;">Unloaded</span>
<span class="t" style="left:11.16px;top:62px;font-size:10.5px;line-height:14px;color:#f4f6f7;letter-spacing:-0.163px;">Home</span>
<span class="t" style="left:9.8px;top:109px;font-size:10.5px;line-height:14px;color:#f4f6f7;letter-spacing:-0.331px;">Alarms</span>
<span class="t" style="left:14.5px;top:157px;font-size:10.5px;line-height:14px;color:#f4f6f7;letter-spacing:-0.06px;">Web</span>
<span class="t" style="left:14.2px;top:205px;font-size:10.5px;line-height:14px;color:#57b355;letter-spacing:-0.393px;">APM</span>
<span class="t" style="left:10.38px;top:252px;font-size:10.5px;line-height:14px;color:#f4f6f7;letter-spacing:-0.434px;">Server</span>
<span class="t" style="left:6.0px;top:298px;font-size:10.5px;line-height:14px;color:#f4f6f7;letter-spacing:-0.106px;">VMware</span>
<span class="t" style="left:11.78px;top:347px;font-size:10.5px;line-height:14px;color:#f4f6f7;letter-spacing:-0.08px;">Cloud</span>
<span class="t" style="left:4.96px;top:394px;font-size:10.5px;line-height:14px;color:#f4f6f7;letter-spacing:0.071px;">Network</span>
<span class="t" style="left:13.36px;top:445px;font-size:10.5px;line-height:14px;color:#f4f6f7;letter-spacing:-0.203px;">RUM</span>
<span class="t" style="left:6.5px;top:488px;font-size:10.5px;line-height:14px;color:#f4f6f7;letter-spacing:-0.706px;">AppLogs</span>
<span class="t" style="left:7.16px;top:536px;font-size:10.5px;line-height:14px;color:#f4f6f7;letter-spacing:-0.235px;">Reports</span>
<span class="t" style="left:11.3px;top:584px;font-size:10.5px;line-height:14px;color:#f4f6f7;letter-spacing:-0.368px;">Admin</span>
<span class="t" style="left:5.1px;top:919px;font-size:10px;line-height:13px;color:#c9d0d4;letter-spacing:0.148px;">2:41 PM</span>
<span class="t" style="left:28.6px;top:88px;font-size:10.0px;line-height:13px;color:#fff;letter-spacing:-0.462px;">47</span>
<span class="t" style="left:45.00px;top:456.62px;width:120px;height:16px;line-height:16px;font-size:11.6px;color:#5f5f5f;text-align:center;transform:rotate(-90deg);letter-spacing:-0.117px;text-indent:-0.117px;">CPU(%)</span>
<span class="t" style="left:911.25px;top:491.00px;width:120px;height:16px;line-height:16px;font-size:11.6px;color:#5f5f5f;text-align:center;transform:rotate(-90deg);letter-spacing:0.4px;text-indent:0.4px;">Count</span>
<span class="t" style="left:45.00px;top:873.50px;width:120px;height:16px;line-height:16px;font-size:11.6px;color:#5f5f5f;text-align:center;transform:rotate(-90deg);letter-spacing:-0.427px;text-indent:-0.427px;">MB</span>
<span class="t" style="left:911.25px;top:857.25px;width:120px;height:16px;line-height:16px;font-size:11.6px;color:#5f5f5f;text-align:center;transform:rotate(-90deg);letter-spacing:-0.427px;text-indent:-0.427px;">MB</span>
</body></html>
